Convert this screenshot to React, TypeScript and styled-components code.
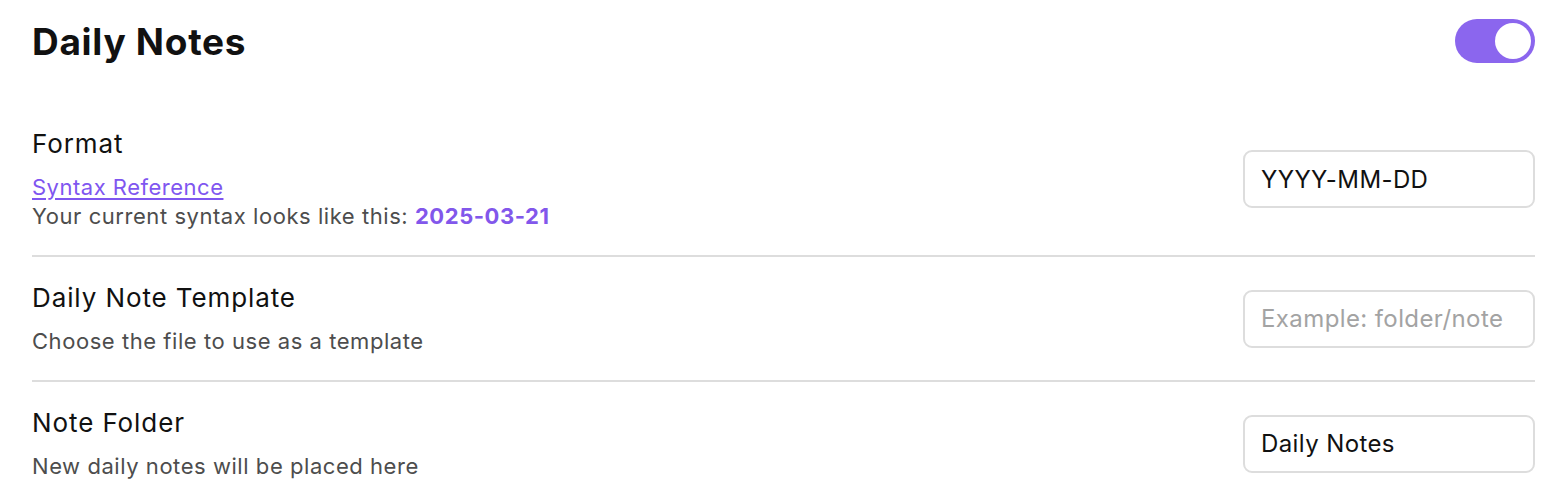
import React, { useState } from 'react';
import styled, { createGlobalStyle } from 'styled-components';

const GlobalStyle = createGlobalStyle`
  body {
    margin: 0;
    background: #ffffff;
    font-family: Inter, "Noto Sans", "Liberation Sans", sans-serif;
    color: #111111;
  }
`;

const Page = styled.div`
  padding: 18px 23px 0 32px;
`;

const Header = styled.div`
  display: flex;
  align-items: center;
  justify-content: space-between;
  height: 46px;
  margin-bottom: 39px;
`;

const Title = styled.h1`
  margin: 0;
  font-size: 37px;
  font-weight: 700;
  letter-spacing: 0.7px;
  color: #111111;
`;

const Toggle = styled.button<{ $on: boolean }>`
  width: 80px;
  height: 44px;
  border: none;
  border-radius: 22px;
  padding: 4px;
  display: flex;
  justify-content: ${(p) => (p.$on ? 'flex-end' : 'flex-start')};
  background: ${(p) => (p.$on ? '#8b66ee' : '#d6d6d6')};
  cursor: pointer;
`;

const Knob = styled.span`
  width: 36px;
  height: 36px;
  border-radius: 50%;
  background: #ffffff;
`;

const Row = styled.div<{ $last?: boolean }>`
  display: flex;
  align-items: center;
  justify-content: space-between;
  padding: 24px 0;
  border-bottom: ${(p) => (p.$last ? 'none' : '2px solid #dddddd')};
`;

const Info = styled.div`
  display: flex;
  flex-direction: column;
`;

const Label = styled.div`
  font-size: 26px;
  line-height: 34px;
  letter-spacing: 0.9px;
  margin-bottom: 12px;
  color: #111111;
`;

const Desc = styled.div`
  font-size: 22px;
  line-height: 29px;
  letter-spacing: 0.55px;
  color: #4d4d4d;
`;

const Link = styled.a`
  font-size: 22px;
  line-height: 29px;
  letter-spacing: 0.5px;
  color: #7f56f0;
  text-decoration: underline;
  text-underline-offset: 3px;
  cursor: pointer;
  align-self: flex-start;
`;

const DateValue = styled.span`
  color: #8257eb;
  font-weight: 700;
`;

const Field = styled.input`
  width: 292px;
  height: 58px;
  box-sizing: border-box;
  border: 2px solid #dddddd;
  border-radius: 9px;
  padding: 0 16px;
  font-family: Inter, "Noto Sans", "Liberation Sans", sans-serif;
  font-size: 24px;
  letter-spacing: 0.4px;
  color: #111111;
  outline: none;
  &::placeholder {
    color: #a3a3a3;
  }
`;

export default function App() {
  const [enabled, setEnabled] = useState(true);
  const [format, setFormat] = useState('YYYY-MM-DD');
  const [template, setTemplate] = useState('');
  const [folder, setFolder] = useState('Daily Notes');

  return (
    <Page>
      <GlobalStyle />
      <Header>
        <Title>Daily Notes</Title>
        <Toggle $on={enabled} onClick={() => setEnabled(!enabled)}>
          <Knob />
        </Toggle>
      </Header>

      <Row>
        <Info>
          <Label>Format</Label>
          <Link>Syntax Reference</Link>
          <Desc>
            Your current syntax looks like this: <DateValue>2025-03-21</DateValue>
          </Desc>
        </Info>
        <Field value={format} onChange={(e) => setFormat(e.target.value)} />
      </Row>

      <Row>
        <Info>
          <Label>Daily Note Template</Label>
          <Desc>Choose the file to use as a template</Desc>
        </Info>
        <Field
          placeholder="Example: folder/note"
          value={template}
          onChange={(e) => setTemplate(e.target.value)}
        />
      </Row>

      <Row $last>
        <Info>
          <Label>Note Folder</Label>
          <Desc>New daily notes will be placed here</Desc>
        </Info>
        <Field value={folder} onChange={(e) => setFolder(e.target.value)} />
      </Row>
    </Page>
  );
}
